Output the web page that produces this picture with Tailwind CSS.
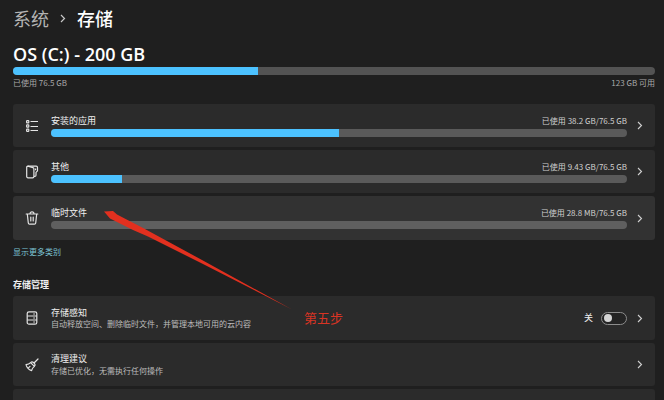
<!DOCTYPE html>
<html lang="zh-CN">
<head>
  <meta charset="UTF-8" />
  <meta name="viewport" content="width=device-width, initial-scale=1.0"/>
  <title>系统 - 存储</title>
  <script src="https://cdn.jsdelivr.net/npm/@tailwindcss/browser@4"></script>
</head>
<body class="relative h-screen overflow-hidden bg-[#1f1f1f] font-['Noto_Sans_CJK_SC',sans-serif] text-[#f0f0f0]">
  <main class="pl-[13px] pr-[9px] pt-[6px]">
    <!-- Breadcrumb -->
    <nav class="flex h-6 items-center gap-[11px] text-[18px] leading-6">
      <a href="#system" class="text-[#b4b4b4]">系统</a>
      <svg class="h-[9px] w-[6px]" viewBox="0 0 6 9" fill="none" stroke="#c8c8c8" stroke-width="1.2"><path d="M1 1l3.5 3.5L1 8"/></svg>
      <h1 class="font-medium text-white">存储</h1>
    </nav>

    <!-- Drive summary -->
    <section class="mt-3">
      <h2 class="h-6 font-['Open_Sans',sans-serif] text-[18px] font-semibold leading-6 text-white">OS (C:) - 200 GB</h2>
      <div class="mt-[1px] h-2 overflow-hidden rounded-full bg-[#535353]" role="progressbar" aria-label="OS (C:)" aria-valuenow="38">
        <div class="h-full bg-[#4cc2ff]" style="width: 38.2%"></div>
      </div>
      <div class="mt-[2px] flex justify-between text-[8px] leading-3 text-[#a8a8a8]">
        <span>已使用 76.5 GB</span>
        <span>123 GB 可用</span>
      </div>
    </section>

    <!-- Categories -->
    <section class="mt-[15px] flex flex-col gap-[3px]">
      <a href="#apps" class="flex h-[43px] items-center rounded-[3px] bg-[#2b2b2b] pl-3 pr-3">
        <svg class="mr-[12px] size-[14px] shrink-0" viewBox="0 0 14 14" fill="none" stroke="#e4e4e4" stroke-width="1.2">
          <rect x="1.6" y="1.6" width="2.2" height="2.2" rx=".6"/><rect x="1.6" y="5.9" width="2.2" height="2.2" rx=".6"/><rect x="1.6" y="10.2" width="2.2" height="2.2" rx=".6"/>
          <path d="M5.5 2.5H13M5.5 7.5H13M5.5 11.5H13"/>
        </svg>
        <div class="flex grow flex-col gap-[2px]">
          <div class="flex justify-between leading-3">
            <span class="text-[9px]">安装的应用</span>
            <span class="text-[8px] text-[#d0d0d0]">已使用 38.2 GB/76.5 GB</span>
          </div>
          <div class="h-2 overflow-hidden rounded-full bg-[#5a5a5a]" role="progressbar" aria-label="安装的应用" aria-valuenow="50">
            <div class="h-full bg-[#4cc2ff]" style="width: 50%"></div>
          </div>
        </div>
        <svg class="ml-[10px] h-[9px] w-[6px] shrink-0" viewBox="0 0 6 9" fill="none" stroke="#d0d0d0" stroke-width="1.1"><path d="M1 1l3.5 3.5L1 8"/></svg>
      </a>
      <a href="#other" class="flex h-[43px] items-center rounded-[3px] bg-[#2b2b2b] pl-3 pr-3">
        <svg class="mr-[12px] size-[14px] shrink-0" viewBox="0 0 14 14" fill="none" stroke="#e4e4e4" stroke-width="1.2" stroke-linejoin="round">
          <path d="M2.8 1.2L8 2.6a1.2 1.2 0 0 1 .9 1.2v7.7a1.3 1.3 0 0 1-1.3 1.3H3a1.3 1.3 0 0 1-1.3-1.3V2.2a1 1 0 0 1 1.1-1z"/>
          <path d="M2.8 1.2h8.4a1.3 1.3 0 0 1 1.3 1.3v3.3L11 7.3v2.9a1.2 1.2 0 0 1-1.2 1.2h-.9M10.6 3.5v1.8"/>
        </svg>
        <div class="flex grow flex-col gap-[2px]">
          <div class="flex justify-between leading-3">
            <span class="text-[9px]">其他</span>
            <span class="text-[8px] text-[#d0d0d0]">已使用 9.43 GB/76.5 GB</span>
          </div>
          <div class="h-2 overflow-hidden rounded-full bg-[#5a5a5a]" role="progressbar" aria-label="其他" aria-valuenow="12">
            <div class="h-full bg-[#4cc2ff]" style="width: 12.3%"></div>
          </div>
        </div>
        <svg class="ml-[10px] h-[9px] w-[6px] shrink-0" viewBox="0 0 6 9" fill="none" stroke="#d0d0d0" stroke-width="1.1"><path d="M1 1l3.5 3.5L1 8"/></svg>
      </a>
      <a href="#temp" class="flex h-11 items-center rounded-[3px] bg-[#323232] pl-3 pr-3">
        <svg class="mr-[12px] size-[14px] shrink-0" viewBox="0 0 14 14" fill="none" stroke="#e4e4e4" stroke-width="1.2" stroke-linecap="round" stroke-linejoin="round">
          <path d="M1.2 3h11.6M2.3 3l1 9a1.3 1.3 0 0 0 1.3 1.2h4.8a1.3 1.3 0 0 0 1.3-1.2l1-9M5 2.8a2 2 0 0 1 4 0M5.8 6v4M8.2 6v4"/>
        </svg>
        <div class="flex grow flex-col gap-[2px]">
          <div class="flex justify-between leading-3">
            <span class="text-[9px]">临时文件</span>
            <span class="text-[8px] text-[#d0d0d0]">已使用 28.8 MB/76.5 GB</span>
          </div>
          <div class="h-2 overflow-hidden rounded-full bg-[#5f5f5f]" role="progressbar" aria-label="临时文件" aria-valuenow="0"></div>
        </div>
        <svg class="ml-[10px] h-[9px] w-[6px] shrink-0" viewBox="0 0 6 9" fill="none" stroke="#d0d0d0" stroke-width="1.1"><path d="M1 1l3.5 3.5L1 8"/></svg>
      </a>
    </section>
    <a href="#more" class="mt-[6px] block text-[8px] leading-3 text-[#7cc4d4]">显示更多类别</a>

    <!-- Storage management -->
    <h3 class="mt-[21px] text-[9px] font-bold leading-3">存储管理</h3>
    <section class="mt-[5px] flex flex-col gap-[3px]">
      <div class="flex h-11 items-center rounded-[3px] bg-[#2b2b2b] pl-3 pr-3">
        <svg class="mr-[12px] size-[14px] shrink-0" viewBox="0 0 14 14" fill="none" stroke="#e4e4e4" stroke-width="1.2">
          <rect x="2.2" y=".8" width="9.6" height="12.4" rx="1.8"/>
          <path d="M2.2 5h9.6M2.2 9h9.6M8.3 3h1.6M8.3 7h1.6M8.3 11h1.6"/>
        </svg>
        <label for="sense" class="grow">
          <span class="block text-[9px] leading-[11px]">存储感知</span>
          <span class="block text-[8px] leading-[11px] text-[#bdbdbd]">自动释放空间、删除临时文件，并管理本地可用的云内容</span>
        </label>
        <span class="mr-2 text-[9px] leading-3">关</span>
        <input id="sense" type="checkbox" role="switch" class="flex h-[13px] w-[26px] shrink-0 appearance-none items-center rounded-full border border-[#8c8c8c] bg-[#242424] px-[2px] before:size-2 before:rounded-full before:bg-[#d4d4d4] checked:justify-end checked:bg-[#4cc2ff]" />
        <button type="button" aria-label="存储感知" class="ml-[10px] shrink-0">
          <svg class="h-[9px] w-[6px]" viewBox="0 0 6 9" fill="none" stroke="#d0d0d0" stroke-width="1.1"><path d="M1 1l3.5 3.5L1 8"/></svg>
        </button>
      </div>
      <a href="#cleanup" class="flex h-[43px] items-center rounded-[3px] bg-[#2b2b2b] pl-3 pr-3">
        <svg class="mr-[12px] size-[14px] shrink-0" viewBox="0 0 14 14" fill="none" stroke="#e4e4e4" stroke-width="1.2" stroke-linecap="round" stroke-linejoin="round">
          <path d="M13 1L9 5M5.6 4.6l3.8 3.8c.9-.9.9-2 .1-2.9l-1-1c-.9-.8-2-.8-2.9.1zM5.6 4.6C4.4 5.8 2.8 6.4 1 6.6c.8 3 2.6 5 5.6 6 .3-1.7 1.3-3 2.8-4.2M3.4 9.9l1.6-1.5"/>
        </svg>
        <div class="grow">
          <span class="block text-[9px] leading-3">清理建议</span>
          <span class="block text-[8px] leading-3 text-[#bdbdbd]">存储已优化，无需执行任何操作</span>
        </div>
        <svg class="ml-[10px] h-[9px] w-[6px] shrink-0" viewBox="0 0 6 9" fill="none" stroke="#d0d0d0" stroke-width="1.1"><path d="M1 1l3.5 3.5L1 8"/></svg>
      </a>
      <div class="h-[43px] rounded-[3px] bg-[#2b2b2b]"></div>
    </section>
  </main>

  <!-- Step annotation -->
  <svg class="pointer-events-none absolute left-[104px] top-[210px] h-[102px] w-[190px]" viewBox="0 0 190 102" fill="#e2301f">
    <path d="M0 1.5L9 1L13 4.5L40 18.5L98 50L188 99.5L98 53.5L44 26.5L29 20L6 8.5z"/>
  </svg>
  <p class="absolute left-[304px] top-[308px] text-[13px] leading-5 text-[#d83424]">第五步</p>
</body>
</html>
